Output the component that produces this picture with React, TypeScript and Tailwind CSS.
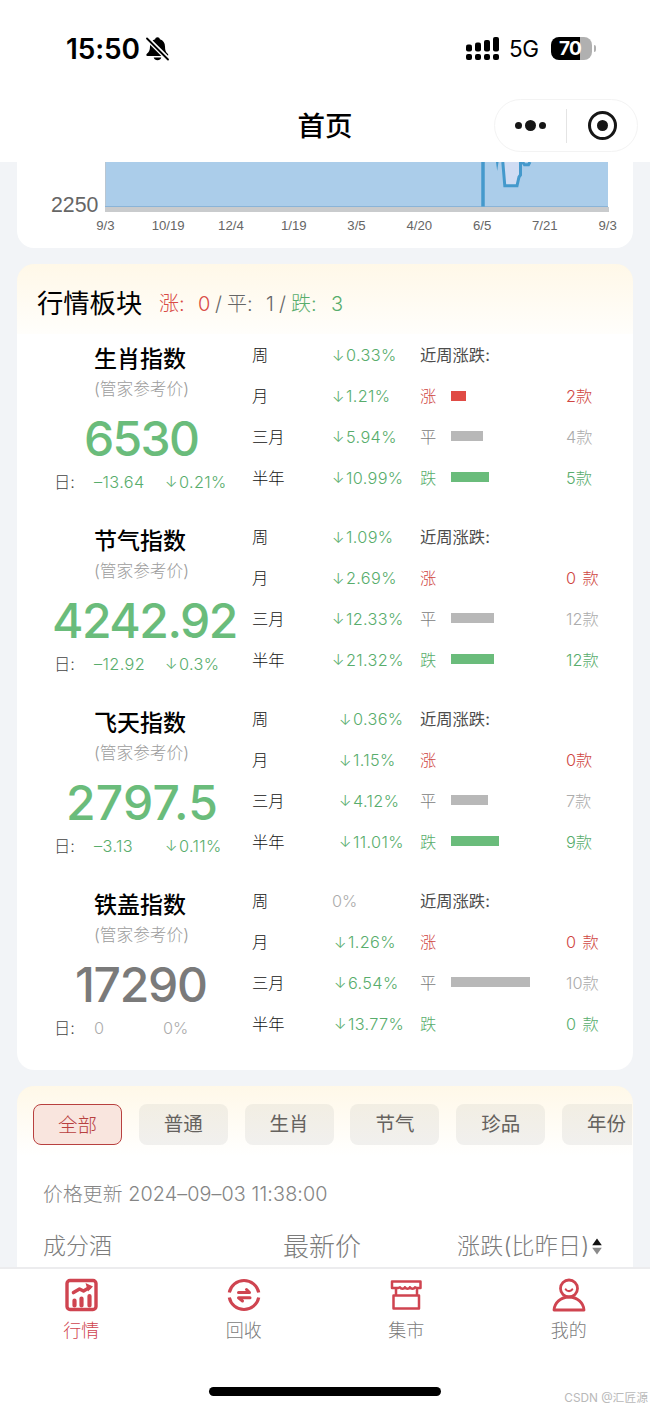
import type { ReactNode } from "react";
import clsx from "clsx";

type Trend = {
  value: string;
  flat?: boolean;
};

type WeekRow = {
  count: string;
  bar: number;
};

type IndexItem = {
  name: string;
  price: string;
  flat?: boolean;
  priceClass: string;
  dayChange: string;
  dayPercent: Trend;
  dayClass: string;
  trendClass: string;
  trends: Trend[];
  week: WeekRow[];
};

const periods = ["周", "月", "三月", "半年"];

const indexes: IndexItem[] = [
  {
    name: "生肖指数",
    price: "6530",
    priceClass: "ml-[67px] tracking-[-1.7px]",
    dayChange: "–13.64",
    dayPercent: { value: "0.21%" },
    dayClass: "w-[71px]",
    trendClass: "-ml-px",
    trends: [{ value: "0.33%" }, { value: "1.21%" }, { value: "5.94%" }, { value: "10.99%" }],
    week: [
      { count: "2款", bar: 15 },
      { count: "4款", bar: 32 },
      { count: "5款", bar: 38 },
    ],
  },
  {
    name: "节气指数",
    price: "4242.92",
    priceClass: "ml-[35px] tracking-[-1.5px]",
    dayChange: "–12.92",
    dayPercent: { value: "0.3%" },
    dayClass: "w-[71px]",
    trendClass: "-ml-px",
    trends: [{ value: "1.09%" }, { value: "2.69%" }, { value: "12.33%" }, { value: "21.32%" }],
    week: [
      { count: "0 款", bar: 0 },
      { count: "12款", bar: 43 },
      { count: "12款", bar: 43 },
    ],
  },
  {
    name: "飞天指数",
    price: "2797.5",
    priceClass: "ml-[49px] tracking-[0.2px]",
    dayChange: "–3.13",
    dayPercent: { value: "0.11%" },
    dayClass: "w-[71px]",
    trendClass: "pl-[6px]",
    trends: [{ value: "0.36%" }, { value: "1.15%" }, { value: "4.12%" }, { value: "11.01%" }],
    week: [
      { count: "0款", bar: 0 },
      { count: "7款", bar: 37 },
      { count: "9款", bar: 48 },
    ],
  },
  {
    name: "铁盖指数",
    price: "17290",
    flat: true,
    priceClass: "ml-[58px] tracking-[-1.3px]",
    dayChange: "0",
    dayPercent: { value: "0%", flat: true },
    dayClass: "w-[69px]",
    trendClass: "pl-px",
    trends: [{ value: "0%", flat: true }, { value: "1.26%" }, { value: "6.54%" }, { value: "13.77%" }],
    week: [
      { count: "0 款", bar: 0 },
      { count: "10款", bar: 79 },
      { count: "0 款", bar: 0 },
    ],
  },
];

const weekStyles = [
  { label: "涨", text: "text-[#cf4642]", count: "text-[#cf4642]", bar: "bg-[#e04b45]" },
  { label: "平", text: "text-[#7c7c7c]", count: "text-[#acacac]", bar: "bg-[#b8b8b8]" },
  { label: "跌", text: "text-[#58ad6c]", count: "text-[#58ad6c]", bar: "bg-[#6abc7b]" },
];

const dates = ["9/3", "10/19", "12/4", "1/19", "3/5", "4/20", "6/5", "7/21", "9/3"];

const categories = ["全部", "普通", "生肖", "节气", "珍品", "年份"];

const StatusBar = () => {
  return (
    <div className="flex h-[97px] items-center pl-[66px] pr-[54px]">
      <span className="w-[79px] whitespace-nowrap text-[28px] font-semibold leading-none tracking-[-0.1px]">
        15:50
      </span>
      <svg width="24" height="26" viewBox="0 0 24 26" className="mt-px">
        <path
          d="M12.5 1.2c-1.3 0-2.2.8-2.4 2C6.8 4.2 5 7 5 10.500c0 4-1.200 5.500-3.100 7.300-1 1-.7 2.200.6 2.200h19.600c1.300 0 1.600-1.200.6-2.200C20.800 16 20 14.500 20 10.500c0-3.500-1.800-6.300-5.100-7.300-.2-1.200-1.100-2-2.400-2z"
          fill="#000"
        />
        <path d="M8.700 21.500h7.600c-.5 1.700-1.900 2.700-3.800 2.700s-3.300-1-3.800-2.700z" fill="#000" />
        <path d="M2 2.200l20.500 20.500" stroke="#fff" strokeWidth="4.800" />
        <path d="M2 2.500l21 21" stroke="#000" strokeWidth="1.800" strokeLinecap="round" />
      </svg>
      <div className="ml-auto flex items-center">
        <svg width="34" height="24" viewBox="0 0 34 24">
          <rect x="0" y="7.500" width="6" height="7" rx="2" />
          <rect x="9" y="5.500" width="6" height="9" rx="2" />
          <rect x="18" y="3" width="6" height="11.500" rx="2" />
          <rect x="27" y="0" width="6" height="14.500" rx="2" />
          <rect x="0" y="17" width="6" height="6" rx="2" />
          <rect x="9" y="17" width="6" height="6" rx="2" />
          <rect x="18" y="17" width="6" height="6" rx="2" />
          <rect x="27" y="17" width="6" height="6" rx="2" />
        </svg>
        <span className="ml-[9px] mt-[2px] w-[42px] text-[22.5px] leading-none tracking-[-0.4px]">5G</span>
        <div className="flex h-[23px] w-[41px] items-center justify-center rounded-[8px] bg-[linear-gradient(90deg,#000_70%,#b0b0b0_70%)] pr-[3px] text-[19px] font-bold leading-none tracking-[-0.8px] text-white">
          70
        </div>
        <div className="ml-[2px] h-[7px] w-[2px] rounded-r-full bg-[#b0b0b0]" />
      </div>
    </div>
  );
};

const TitleBar = () => {
  return (
    <div className="grid h-[65px] grid-cols-3 items-start">
      <h1 className="col-start-2 mt-[16px] text-center text-[27.5px] font-medium leading-none">首页</h1>
      <div className="mr-[12px] mt-[2px] flex h-[53px] w-[144px] items-center justify-self-end rounded-full border border-[#f3f3f3]">
        <div className="flex w-[71px] items-center justify-center gap-[3px]">
          <span className="size-[7px] rounded-full bg-[#161616]" />
          <span className="size-[11px] rounded-full bg-[#161616]" />
          <span className="size-[7px] rounded-full bg-[#161616]" />
        </div>
        <div className="h-[34px] w-px bg-[#e4e4e4]" />
        <div className="ml-[21px] flex size-[29px] items-center justify-center rounded-full border-[3px] border-[#161616]">
          <span className="size-[11px] rounded-full bg-[#161616]" />
        </div>
      </div>
    </div>
  );
};

const ChartCard = () => {
  return (
    <section className="h-[86px] overflow-hidden rounded-b-[17px] bg-white font-['Liberation_Sans',sans-serif] text-[#666]">
      <div className="flex h-[51px]">
        <span className="mt-[33px] w-[88px] pl-[34px] text-[21.3px] leading-none">2250</span>
        <svg width="504" height="51" viewBox="0 0 504 51">
          <rect width="503" height="46" fill="#abcdea" />
          <path d="M0.500 0V46" stroke="#b9c6d2" />
          <path d="M0 44.500H503" stroke="#8ab4d8" />
          <rect y="45" width="504" height="5" fill="#c9cbcd" />
          <path d="M398 0L400 23.500H412L414 15L415.500 13V0z" fill="#cfdcf3" />
          <path d="M378 0V44.500" stroke="#4499cc" strokeWidth="3.500" />
          <path d="M391 0H393.500L392.200 9z" fill="#4499cc" />
          <path d="M397.800 0L399.800 23.800H412L414 15L415.500 13V0" fill="none" stroke="#4499cc" strokeWidth="3" />
          <path d="M417.500 0L419.500 2.800H423.500L425 0" fill="none" stroke="#4499cc" strokeWidth="3" />
        </svg>
      </div>
      <div className="ml-[57px] mt-[6px] flex w-[565px] text-[13.2px] leading-none">
        {dates.map((date, i) => (
          <span key={i} className="flex-1 text-center">
            {date}
          </span>
        ))}
      </div>
    </section>
  );
};

const TrendValue = ({ trend }: { trend: Trend }) => {
  if (trend.flat) {
    return <span className="text-[#acacac]">{trend.value}</span>;
  }
  return (
    <span className="flex items-center tracking-[0.35px] text-[#58ad6c]">
      <span className="w-[14px] text-[15px]">↓</span>
      {trend.value}
    </span>
  );
};

const IndexBlock = ({ item }: { item: IndexItem }) => {
  return (
    <div className="flex h-[182px] text-[16.3px] font-light leading-none">
      <div className="w-[235px] shrink-0">
        <h3 className="ml-[77px] mt-[13px] text-[23px] font-medium leading-none">{item.name}</h3>
        <p className="ml-[77px] mt-[10px] whitespace-nowrap text-[16.7px] text-[#9c9c9c]">(管家参考价)</p>
        <div
          className={clsx(
            "mt-[17px] whitespace-nowrap text-[48px] font-medium leading-none",
            item.priceClass,
            item.flat ? "text-[#7a7a7a]" : "text-[#6abc7b]"
          )}
        >
          {item.price}
        </div>
        <div className="ml-[37px] mt-[11px] flex items-center whitespace-nowrap text-[#444]">
          <span className="w-[40px]">日:</span>
          <span className={clsx(item.dayClass, item.flat ? "text-[#acacac]" : "tracking-[0.4px] text-[#58ad6c]")}>
            {item.dayChange}
          </span>
          <TrendValue trend={item.dayPercent} />
        </div>
      </div>
      <div className="w-[168px] shrink-0">
        {periods.map((period, i) => (
          <div key={period} className="flex h-[40.8px] items-center">
            <span className="w-[81px] text-[#111]">{period}</span>
            <div className={item.trends[i].flat ? "-ml-px" : item.trendClass}>
              <TrendValue trend={item.trends[i]} />
            </div>
          </div>
        ))}
      </div>
      <div className="flex-1">
        <div className="flex h-[40.8px] items-center font-normal text-[#4c4c4c]">近周涨跌:</div>
        {item.week.map((row, i) => (
          <div key={i} className="flex h-[40.8px] items-center">
            <span className={clsx("w-[31px]", weekStyles[i].text)}>{weekStyles[i].label}</span>
            <div className="w-[115px]">
              <div className={clsx("-mt-px h-[10px]", weekStyles[i].bar)} style={{ width: row.bar }} />
            </div>
            <span className={clsx("whitespace-pre", row.count.includes(" ") && "tracking-[0.9px]", weekStyles[i].count)}>
              {row.count}
            </span>
          </div>
        ))}
      </div>
    </div>
  );
};

const SectorCard = () => {
  return (
    <section className="mt-[16px] h-[806px] rounded-[17px] bg-white bg-[linear-gradient(#fff8e8,#fffefb)] bg-[length:100%_70px] bg-no-repeat">
      <div className="flex h-[71px] items-center pl-[20px] pt-[9px] leading-none">
        <h2 className="w-[122px] text-[26.3px]">行情板块</h2>
        <div className="flex whitespace-pre text-[20px] font-light text-[#666]">
          <span className="w-[39px] text-[#d94a45]">涨:</span>
          <span className="w-[17px] text-[#d94a45]">0</span>
          <span className="w-[12px]">/</span>
          <span className="w-[39px]">平:</span>
          <span className="w-[13px]">1</span>
          <span className="w-[12px]">/</span>
          <span className="w-[40px] text-[#58ad6c]">跌:</span>
          <span className="text-[#58ad6c]">3</span>
        </div>
      </div>
      {indexes.map((item) => (
        <IndexBlock key={item.name} item={item} />
      ))}
    </section>
  );
};

const PriceCard = () => {
  return (
    <section className="mt-[16px] h-[190px] overflow-hidden rounded-t-[17px] bg-white bg-[linear-gradient(#fff8e8,#fff)] bg-[length:100%_70px] bg-no-repeat font-light">
      <div className="mr-px flex gap-[16.8px] overflow-hidden pl-[16px] pt-[18px]">
        {categories.map((name, i) => (
          <button
            key={name}
            className={clsx(
              "h-[41px] w-[89px] shrink-0 rounded-[8px] text-[19.5px] leading-none",
              i === 0
                ? "border-[1.5px] border-[#b8403f] bg-[#f9e5de] pt-[2px] text-[#b8403f]"
                : "bg-[linear-gradient(#f2eee3,#f1f0ee)] font-normal text-[#65625e]"
            )}
          >
            {name}
          </button>
        ))}
      </div>
      <p className="ml-[26px] mt-[40px] text-[19.8px] leading-none tracking-[0.1px] text-[#858585]">
        价格更新 2024–09–03 11:38:00
      </p>
      <div className="ml-[26px] mt-[29px] flex h-[26px] items-center text-[23px] leading-none text-[#7c7c7c]">
        <span className="w-[240px]">成分酒</span>
        <span className="w-[174px] text-[26px]">最新价</span>
        <span className="w-[135px] whitespace-nowrap tracking-[0.2px]">涨跌(比昨日)</span>
        <svg width="10" height="17" viewBox="0 0 10 17">
          <path d="M5 0.500L9.800 7.300H0.200z" fill="#111" />
          <path d="M5 16.500L9.800 9.700H0.200z" fill="#8a8a8a" />
        </svg>
      </div>
    </section>
  );
};

const MarketIcon = () => (
  <svg width="34" height="34" viewBox="0 0 34 34" fill="none" stroke="#cf4450" strokeLinecap="round">
    <rect x="3" y="2.500" width="29" height="29" rx="3" strokeWidth="3.400" />
    <path d="M10.500 22.500v5M17.500 20.500v7M25.500 18v9.500" strokeWidth="4.200" />
    <path d="M9.500 14.500l6-3.500 4 2 6-3.500" strokeWidth="3.600" strokeLinejoin="round" />
    <path d="M21.500 5l7.500 3.500-5 5z" fill="#cf4450" stroke="none" />
  </svg>
);

const RecycleIcon = () => (
  <svg width="34" height="34" viewBox="0 0 34 34" fill="none" stroke="#cf4450" strokeWidth="3.200">
    <path d="M2.300 14.500A15 15 0 0 1 31.700 14.500" />
    <path d="M2.300 19.500A15 15 0 0 0 31.700 19.500" />
    <path d="M11.500 14.500H22.500L19.500 11.500" strokeWidth="3" strokeLinecap="round" strokeLinejoin="round" />
    <path d="M23 19.800H11.500L15.500 23" strokeWidth="3" strokeLinecap="round" strokeLinejoin="round" />
  </svg>
);

const ShopIcon = () => (
  <svg width="34" height="34" viewBox="0 0 34 34" fill="none" stroke="#cf4450" strokeWidth="2.500">
    <path
      d="M3 3.500h28.500v6.500h-3.500c-1 0-1.500-.8-2-.8-1 2-4 2-5 0-1 2-4 2-5 0-1 2-4 2-5 0-.5 0-1 .8-2 .8H3z"
      strokeLinejoin="round"
    />
    <path d="M7 10v7M28 10v7" />
    <path d="M4.500 17.500h25.500v13H4.500z" strokeLinejoin="round" />
  </svg>
);

const UserIcon = () => (
  <svg width="34" height="34" viewBox="0 0 34 34" fill="none" stroke="#cf4450" strokeWidth="2.800">
    <circle cx="17" cy="10.500" r="8.500" />
    <path d="M13.800 11.500c1.500 2.200 5 2.200 6.400 0" strokeWidth="2.200" strokeLinecap="round" />
    <path d="M2 32c.5-7 6.500-13 15-13s14.500 6 15 13z" strokeLinejoin="round" />
  </svg>
);

const tabs: { label: string; icon: ReactNode }[] = [
  { label: "行情", icon: <MarketIcon /> },
  { label: "回收", icon: <RecycleIcon /> },
  { label: "集市", icon: <ShopIcon /> },
  { label: "我的", icon: <UserIcon /> },
];

const TabBar = () => {
  return (
    <nav className="relative flex h-[142px] flex-col border-t-2 border-[#ececee] bg-white">
      <div className="flex pt-[9px]">
        {tabs.map((tab, i) => (
          <div
            key={tab.label}
            className={clsx(
              "flex flex-1 flex-col items-center text-[18px] font-light leading-none",
              i === 0 ? "text-[#cf4450]" : "text-[#7c7c7c]"
            )}
          >
            {tab.icon}
            <span className="mt-[10px]">{tab.label}</span>
          </div>
        ))}
      </div>
      <div className="mx-auto mt-auto mb-[13px] h-[9px] w-[232px] rounded-full bg-black" />
      <span className="absolute bottom-[4px] right-[2px] text-[11.8px] leading-none text-[#b9b9b9]">
        CSDN @汇匠源
      </span>
    </nav>
  );
};

export default function App() {
  return (
    <div className="flex h-[1409px] w-[650px] flex-col overflow-hidden bg-[#f2f4f7] font-[Inter,'Noto_Sans_CJK_SC',sans-serif] text-black">
      <header className="h-[162px] shrink-0 bg-white">
        <StatusBar />
        <TitleBar />
      </header>
      <main className="h-[1105px] shrink-0 overflow-hidden px-[17px]">
        <ChartCard />
        <SectorCard />
        <PriceCard />
      </main>
      <TabBar />
    </div>
  );
}
